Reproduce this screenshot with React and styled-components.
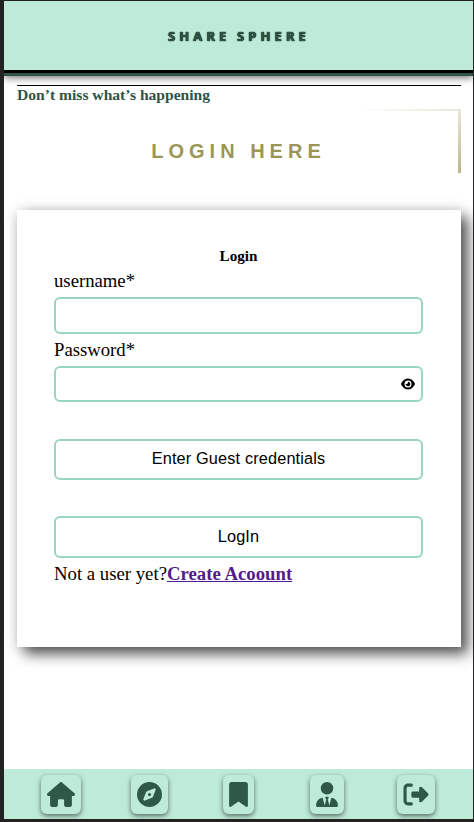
import React from "react";
import styled, { createGlobalStyle } from "styled-components";
import { FaHouse, FaCompass, FaBookmark, FaUserTie, FaRightFromBracket, FaEye } from "react-icons/fa6";

const GlobalStyle = createGlobalStyle`
  * { box-sizing: border-box; }
  body { margin: 0; background: #232122; font-family: "Liberation Serif", "Times New Roman", serif; }
`;

const Page = styled.div`
  height: 822px;
  padding: 1px 1px 3px 4px;
  background: #232122;
`;
const Screen = styled.div`
  height: 818px;
  display: flex;
  flex-direction: column;
  overflow: hidden;
  background: #fff;
`;
const Header = styled.header`
  flex: none;
  height: 72px;
  display: flex;
  align-items: center;
  justify-content: center;
  background: #bdebd7;
  border-bottom: 3px solid #000;
  box-shadow: 0 3px 0 #2f5447, 0 4px 8px rgba(0, 0, 0, 0.65);
`;
const Brand = styled.h1`
  margin: 1px 0 0 1px;
  font: 700 13px/16px "Noto Sans", sans-serif;
  letter-spacing: 4.1px;
  word-spacing: -0.8px;
  color: #2f5849;
  text-shadow: 0 0 1px #000, 0 0 1px #000;
`;
const Main = styled.main`
  flex: 1;
  padding: 12px 12px 0 13px;
`;
const Tagline = styled.p`
  height: 24px;
  margin: 0;
  border-top: 1px solid #000;
  font-weight: 700;
  font-size: 15.6px;
  line-height: 18px;
  color: #2f5447;
`;
const TitleArea = styled.div`
  height: 64px;
  display: grid;
  grid-template-columns: 1fr 3px;
  background: linear-gradient(90deg, transparent 76%, #e9e7d8) top / 100% 2px no-repeat;
`;
const Title = styled.h2`
  margin: 28px 0 0 2px;
  text-align: center;
  font: 700 20px/28px "Liberation Sans", Arial, sans-serif;
  letter-spacing: 5px;
  color: #9c9656;
`;
const TitleEdge = styled.span`
  background: linear-gradient(#e9e7d8, #bbb78a);
`;
const Card = styled.form`
  height: 437px;
  margin-top: 37px;
  padding: 36px 38px 37px 37px;
  background: #fff;
  box-shadow: 7px 7px 13px rgba(0, 0, 0, 0.65), 0 0 13px rgba(0, 0, 0, 0.14);
`;
const CardTitle = styled.h3`
  margin: 0;
  text-align: center;
  font-size: 15.2px;
  line-height: 20px;
`;
const Label = styled.label`
  display: block;
  height: ${(p) => p.$height}px;
  padding-top: ${(p) => p.$height - 27}px;
  font-size: 18.72px;
  line-height: 22px;
`;
const Field = styled.div`
  display: flex;
  align-items: center;
  justify-content: flex-end;
  height: ${(p) => p.$height}px;
  margin-bottom: ${(p) => p.$gap}px;
  padding-right: 6px;
  border: 2px solid #9ad5c1;
  border-radius: 6px;
`;
const Input = styled.input`
  flex: 1;
  min-width: 0;
  border: 0;
  outline: 0;
  background: transparent;
`;
const Button = styled.button`
  display: block;
  width: 100%;
  height: ${(p) => p.$height}px;
  margin: 0 0 ${(p) => p.$gap}px;
  padding: 0 0 2px;
  border: 2px solid #9ad5c1;
  border-radius: 6px;
  background: #fff;
  color: #000;
  font: 16.3px "Liberation Sans", Arial, sans-serif;
  letter-spacing: 0.15px;
`;
const Signup = styled.p`
  margin: 0;
  font-size: 18.75px;
  line-height: 22px;
`;
const SignupLink = styled.a`
  font-weight: 700;
  color: #551a8b;
`;
const Nav = styled.nav`
  flex: none;
  height: 50px;
  display: grid;
  grid-template-columns: repeat(5, 1fr);
  justify-items: center;
  align-items: start;
  padding: 6px 12.7px 0;
  background: #bdebd7;
`;
const NavItem = styled.a`
  display: block;
  width: ${(p) => p.$icon + 12}px;
  height: 39px;
  padding: 7px 6px;
  border-radius: 6px;
  color: #2f5849;
  box-shadow: 0 2px 5px rgba(0, 0, 0, 0.55);
  svg { display: block; width: 100%; height: 25px; }
`;

const items = [
  { label: "Home", Icon: FaHouse, width: 28 },
  { label: "Explore", Icon: FaCompass, width: 25 },
  { label: "Bookmarks", Icon: FaBookmark, width: 19 },
  { label: "Profile", Icon: FaUserTie, width: 22 },
  { label: "Log out", Icon: FaRightFromBracket, width: 26 },
];

export default function App() {
  return (
    <Page>
      <GlobalStyle />
      <Screen>
        <Header><Brand>SHARE SPHERE</Brand></Header>
        <Main>
          <Tagline>Don’t miss what’s happening</Tagline>
          <TitleArea>
            <Title>LOGIN HERE</Title>
            <TitleEdge />
          </TitleArea>
          <Card>
            <CardTitle>Login</CardTitle>
            <Label $height={31} htmlFor="username">username*</Label>
            <Field $height={37} $gap={2}><Input id="username" /></Field>
            <Label $height={30} htmlFor="password">Password*</Label>
            <Field $height={36} $gap={37}>
              <Input id="password" type="password" />
              <FaEye size={14} />
            </Field>
            <Button type="button" $height={41} $gap={36}>Enter Guest credentials</Button>
            <Button type="button" $height={42} $gap={5}>LogIn</Button>
            <Signup>Not a user yet?<SignupLink href="#">Create Acoount</SignupLink></Signup>
          </Card>
        </Main>
        <Nav>
          {items.map(({ label, Icon, width }) => (
            <NavItem key={label} href="#" $icon={width}><Icon /></NavItem>
          ))}
        </Nav>
      </Screen>
    </Page>
  );
}
